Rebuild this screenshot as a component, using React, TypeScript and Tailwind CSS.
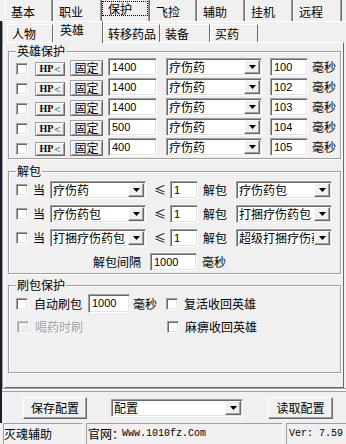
import React from 'react';

const sunken =
  'border border-t-[#a0a0a0] border-l-[#a0a0a0] border-b-white border-r-white shadow-[inset_1px_1px_0_#696969,inset_-1px_-1px_0_#e3e3e3]';
const raised =
  'border border-t-white border-l-white border-b-[#696969] border-r-[#696969] shadow-[inset_-1px_-1px_0_#a0a0a0] bg-[#f0f0f0]';
const smallBtn =
  'border border-t-[#a0a0a0] border-l-[#a0a0a0] border-b-[#696969] border-r-[#696969] shadow-[inset_1px_1px_0_#fff,inset_-1px_-1px_0_#a0a0a0] bg-[#f0f0f0]';
const num = "font-['Liberation_Sans',sans-serif] text-[11px]";

const CheckBox: React.FC<{ className?: string; disabled?: boolean }> = ({ className = '', disabled }) => (
  <div className={`${sunken} w-[12px] h-[12px] shrink-0 ${disabled ? 'bg-[#f0f0f0]' : 'bg-white'} ${className}`} />
);

const TextBox: React.FC<{ value: string; className?: string }> = ({ value, className = '' }) => (
  <div className={`${sunken} h-[18px] shrink-0 bg-white flex items-center pl-[3px] ${num} ${className}`}>{value}</div>
);

const Arrow = () => (
  <svg width="7" height="4" viewBox="0 0 7 4">
    <polygon points="0,0 7,0 3.5,4" fill="#000" />
  </svg>
);

// text that is too long for the box is cut at the drop button, as in the original
const Combo: React.FC<{ text: string; className?: string; cut?: boolean }> = ({ text, className = '', cut }) => (
  <div className={`${sunken} h-[18px] shrink-0 bg-white flex items-center pl-[2px] pr-[1px] ${className}`}>
    <span className={`flex-1 min-w-0 whitespace-nowrap ${cut ? 'overflow-x-clip' : ''}`}>{text}</span>
    <div className={`${raised} w-[16px] h-[14px] shrink-0 flex items-center justify-center`}>
      <Arrow />
    </div>
  </div>
);

const Group: React.FC<{ title: string; className?: string; children: React.ReactNode }> = ({
  title,
  className = '',
  children,
}) => (
  <div className={`relative w-[333px] border border-[#a0a0a0] shadow-[1px_1px_0_#fff,inset_1px_1px_0_#fff] ${className}`}>
    <span className="absolute left-[7px] top-[-8px] bg-[#f0f0f0] px-[1px] leading-[14px]">{title}</span>
    {children}
  </div>
);

const topTabs = [
  { t: '基本', w: 'w-[48px]' },
  { t: '职业', w: 'w-[49px]' },
  { t: '保护', w: 'w-[48px]', sel: true },
  { t: '飞捡', w: 'w-[47px]' },
  { t: '辅助', w: 'w-[48px]' },
  { t: '挂机', w: 'w-[48px]' },
  { t: '远程', w: 'w-[49px]' },
];

const subTabs = [
  { t: '人物', w: 'w-[46px]' },
  { t: '英雄', w: 'w-[50px]', sel: true },
  { t: '转移药品', w: 'w-[57px]' },
  { t: '装备', w: 'w-[50px]' },
  { t: '买药', w: 'w-[48px]' },
];

const heroRows = ['1400|100', '1400|102', '1400|103', '500|104', '400|105'];

const unpackRows = [
  { a: '疗伤药', b: '疗伤药包' },
  { a: '疗伤药包', b: '打捆疗伤药包' },
  { a: '打捆疗伤药包', b: '超级打捆疗伤药包', cut: true },
];

export default function App() {
  return (
    <div className="w-[346px] h-[444px] bg-[#f0f0f0] overflow-hidden flex flex-col text-[12px] text-black font-['Noto_Sans_CJK_SC',sans-serif] leading-none">
      {/* outer tabs */}
      <div className="h-[21px] flex pl-[5px] shrink-0">
        {topTabs.map((tab) =>
          tab.sel ? (
            <div key={tab.t} className={`${tab.w} h-[21px] border-r border-r-[#696969] shadow-[inset_-1px_0_0_#a0a0a0] pt-[1px]`}>
              <div className="w-[46px] h-[15px] border border-dotted border-black flex items-center pl-[5px]">{tab.t}</div>
            </div>
          ) : (
            <div
              key={tab.t}
              className={`${tab.w} h-[21px] border-l border-l-white border-r border-r-[#696969] shadow-[inset_-1px_0_0_#a0a0a0] flex items-center pl-[5px] pt-[2px]`}
            >
              {tab.t}
            </div>
          ),
        )}
      </div>

      <div className="flex flex-col border-l-2 border-l-[#1c1c2c] shrink-0">
        {/* outer page */}
        <div className="border-t border-t-white border-l border-l-[#a0a0a0]">
          <div className="h-[20px] flex items-end pl-[4px]">
            {subTabs.map((tab) =>
              tab.sel ? (
                <div
                  key={tab.t}
                  className={`${tab.w} h-[22px] mb-[-1px] relative z-10 bg-[#f0f0f0] border-l border-l-white border-t border-t-white border-r border-r-[#696969] flex items-start pt-[2px] pl-[6px]`}
                >
                  {tab.t}
                </div>
              ) : (
                <div
                  key={tab.t}
                  className={`${tab.w} h-[18px] border-t border-t-white border-r border-r-[#696969] shadow-[inset_1px_0_0_#fff] flex items-center pl-[5px] pt-[1px]`}
                >
                  {tab.t}
                </div>
              ),
            )}
          </div>

          {/* inner page */}
          <div className="ml-[1px] w-[340px] h-[346px] border border-t-white border-l-white border-r-[#696969] border-b-[#696969] pl-[3px] pt-[8px]">
            <Group title="英雄保护" className="h-[108px]">
              <div className="flex flex-col pl-[7px] pt-[6px]">
                {heroRows.map((r, i) => {
                  const [a, b] = r.split('|');
                  return (
                    <div key={i} className="flex h-[20px] items-start">
                      <CheckBox className="mt-[5px]" />
                      <div className={`${smallBtn} ml-[7px] mt-[4px] w-[30px] h-[14px] flex items-center justify-center font-['Liberation_Serif',serif] font-bold text-[10px]`}>
                        HP<span className="font-normal text-[11px] ml-[1px]">&lt;</span>
                      </div>
                      <div className={`${smallBtn} ml-[5px] mt-[2px] w-[33px] h-[16px] flex items-center justify-center`}>固定</div>
                      <TextBox value={a} className="ml-[5px] w-[49px]" />
                      <Combo text="疗伤药" className="ml-[9px] w-[96px]" />
                      <TextBox value={b} className="ml-[8px] w-[38px]" />
                      <div className="ml-[4px] h-[18px] flex items-center">毫秒</div>
                    </div>
                  );
                })}
              </div>
            </Group>

            <Group title="解包" className="h-[103px] mt-[12px]">
              <div className="flex flex-col gap-[6px] pl-[7px] pt-[9px]">
                {unpackRows.map((r, i) => (
                  <div key={i} className="flex h-[18px] items-start">
                    <CheckBox className="mt-[3px]" />
                    <div className="ml-[5px] w-[12px] h-[18px] flex items-center">当</div>
                    <Combo text={r.a} className="ml-[5px] w-[96px]" />
                    <div className="ml-[8px] w-[12px] h-[18px] flex items-center">≤</div>
                    <TextBox value="1" className="ml-[4px] w-[28px]" />
                    <div className="ml-[5px] w-[24px] h-[18px] flex items-center">解包</div>
                    <Combo text={r.b} cut={r.cut} className="ml-[9px] w-[96px]" />
                  </div>
                ))}
                <div className="flex h-[18px] items-start">
                  <div className="ml-[77px] w-[48px] h-[18px] flex items-center">解包间隔</div>
                  <TextBox value="1000" className="ml-[9px] w-[47px]" />
                  <div className="ml-[5px] h-[18px] flex items-center">毫秒</div>
                </div>
              </div>
            </Group>

            <Group title="刷包保护" className="h-[88px] mt-[11px]">
              <div className="flex flex-col pl-[7px] pt-[8px]">
                <div className="flex h-[19px] items-start">
                  <CheckBox className="mt-[4px]" />
                  <div className="ml-[6px] w-[48px] h-[19px] flex items-center">自动刷包</div>
                  <TextBox value="1000" className="ml-[6px] w-[42px] h-[19px]" />
                  <div className="ml-[3px] w-[24px] h-[19px] flex items-center">毫秒</div>
                  <CheckBox className="ml-[9px] mt-[4px]" />
                  <div className="ml-[6px] h-[19px] flex items-center">复活收回英雄</div>
                </div>
                <div className="flex items-start mt-[8px]">
                  <CheckBox disabled className="ml-[1px] border-t-[#c0c0c0] border-l-[#c0c0c0] shadow-[inset_1px_1px_0_#a0a0a0,inset_-1px_-1px_0_#e3e3e3]" />
                  <div className="ml-[6px] w-[48px] h-[12px] flex items-center text-[#a0a0a0] [text-shadow:1px_1px_0_#fff]">喝药时刷</div>
                  <CheckBox className="ml-[84px]" />
                  <div className="ml-[6px] h-[12px] flex items-center">麻痹收回英雄</div>
                </div>
              </div>
            </Group>
          </div>
        </div>

        {/* separator */}
        <div className="h-[4px] border-t border-t-[#a0a0a0] border-b border-b-[#a0a0a0] shadow-[inset_0_1px_0_#fff]" />

        {/* buttons */}
        <div className="h-[31px] flex items-start pt-[5px]">
          <div className={`${raised} ml-[21px] w-[64px] h-[22px] flex items-center justify-center`}>保存配置</div>
          <Combo text="配置" className="ml-[24px] mt-[2px] w-[132px]" />
          <div className={`${raised} ml-[25px] w-[65px] h-[22px] flex items-center justify-center`}>读取配置</div>
        </div>
      </div>

      {/* status bar */}
      <div className="h-[21px] flex pl-[3px] gap-[3px] shrink-0">
        <div className="w-[80px] h-[21px] border-t border-l border-t-[#a0a0a0] border-l-[#a0a0a0] border-r border-r-white flex items-center">
          灭魂辅助
        </div>
        <div className="w-[197px] h-[21px] border-t border-l border-t-[#a0a0a0] border-l-[#a0a0a0] border-r border-r-white flex items-center pl-[1px]">
          官网：<span className="font-['Liberation_Mono',monospace] text-[10px] ml-[-2px]">Www.1010fz.Com</span>
        </div>
        <div className="flex-1 h-[21px] border-t border-l border-t-[#a0a0a0] border-l-[#a0a0a0] flex items-center pl-[2px] font-['Liberation_Mono',monospace] text-[10px]">
          Ver: 7.59
        </div>
      </div>
    </div>
  );
}
